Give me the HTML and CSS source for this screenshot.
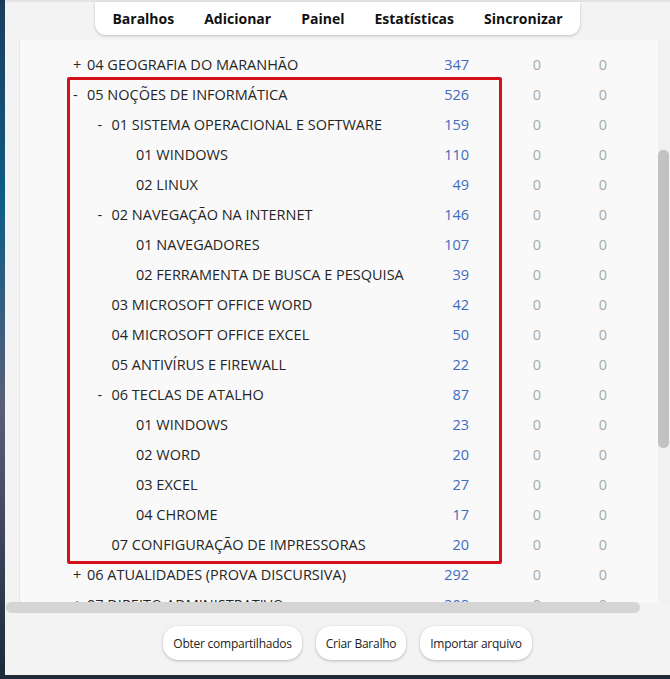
FILE: index.html
```html
<!DOCTYPE html>
<html lang="pt-BR">
<head>
  <meta charset="UTF-8" />
  <meta name="viewport" content="width=device-width, initial-scale=1.0"/>
  <title>Baralhos</title>
  <link rel="stylesheet" href="styles.css">
</head>
<body>

<div class="window">

  <nav class="toolbar">
    <span>Baralhos</span>
    <span>Adicionar</span>
    <span>Painel</span>
    <span>Estatísticas</span>
    <span>Sincronizar</span>
  </nav>

  <div class="browser">
    <div class="deck-panel">
      <div class="deck-list">
        <div class="row"><span class="name"><i>+</i>04 GEOGRAFIA DO MARANHÃO</span><span class="due">347</span><span class="zero">0</span><span class="zero">0</span></div>
        <div class="row"><span class="name"><i>-</i>05 NOÇÕES DE INFORMÁTICA</span><span class="due">526</span><span class="zero">0</span><span class="zero">0</span></div>
        <div class="row"><span class="name lvl-1"><i>-</i>01 SISTEMA OPERACIONAL E SOFTWARE</span><span class="due">159</span><span class="zero">0</span><span class="zero">0</span></div>
        <div class="row"><span class="name lvl-2"><i></i>01 WINDOWS</span><span class="due">110</span><span class="zero">0</span><span class="zero">0</span></div>
        <div class="row"><span class="name lvl-2"><i></i>02 LINUX</span><span class="due">49</span><span class="zero">0</span><span class="zero">0</span></div>
        <div class="row"><span class="name lvl-1"><i>-</i>02 NAVEGAÇÃO NA INTERNET</span><span class="due">146</span><span class="zero">0</span><span class="zero">0</span></div>
        <div class="row"><span class="name lvl-2"><i></i>01 NAVEGADORES</span><span class="due">107</span><span class="zero">0</span><span class="zero">0</span></div>
        <div class="row"><span class="name lvl-2"><i></i>02 FERRAMENTA DE BUSCA E PESQUISA</span><span class="due">39</span><span class="zero">0</span><span class="zero">0</span></div>
        <div class="row"><span class="name lvl-1"><i></i>03 MICROSOFT OFFICE WORD</span><span class="due">42</span><span class="zero">0</span><span class="zero">0</span></div>
        <div class="row"><span class="name lvl-1"><i></i>04 MICROSOFT OFFICE EXCEL</span><span class="due">50</span><span class="zero">0</span><span class="zero">0</span></div>
        <div class="row"><span class="name lvl-1"><i></i>05 ANTIVÍRUS E FIREWALL</span><span class="due">22</span><span class="zero">0</span><span class="zero">0</span></div>
        <div class="row"><span class="name lvl-1"><i>-</i>06 TECLAS DE ATALHO</span><span class="due">87</span><span class="zero">0</span><span class="zero">0</span></div>
        <div class="row"><span class="name lvl-2"><i></i>01 WINDOWS</span><span class="due">23</span><span class="zero">0</span><span class="zero">0</span></div>
        <div class="row"><span class="name lvl-2"><i></i>02 WORD</span><span class="due">20</span><span class="zero">0</span><span class="zero">0</span></div>
        <div class="row"><span class="name lvl-2"><i></i>03 EXCEL</span><span class="due">27</span><span class="zero">0</span><span class="zero">0</span></div>
        <div class="row"><span class="name lvl-2"><i></i>04 CHROME</span><span class="due">17</span><span class="zero">0</span><span class="zero">0</span></div>
        <div class="row"><span class="name lvl-1"><i></i>07 CONFIGURAÇÃO DE IMPRESSORAS</span><span class="due">20</span><span class="zero">0</span><span class="zero">0</span></div>
        <div class="row"><span class="name"><i>+</i>06 ATUALIDADES (PROVA DISCURSIVA)</span><span class="due">292</span><span class="zero">0</span><span class="zero">0</span></div>
        <div class="row"><span class="name"><i>+</i>07 DIREITO ADMINISTRATIVO</span><span class="due">308</span><span class="zero">0</span><span class="zero">0</span></div>

        <!-- highlight around the expanded deck -->
        <div class="highlight"></div>
      </div>
    </div>
    <div class="vscroll"><div class="thumb"></div></div>
  </div>

  <div class="hscroll"></div>

  <div class="actions">
    <button>Obter compartilhados</button>
    <button>Criar Baralho</button>
    <button>Importar arquivo</button>
  </div>

</div>

</body>
</html>
```

FILE: styles.css
```css
body {
  margin: 0;
  height: 679px;
  overflow: hidden;
  background: linear-gradient(180deg, #1b3d5c 0%, #0f5d86 30%, #5a5f78 60%, #1c2a3a 100%);
  font-family: "Open Sans", "Noto Sans", Arial, sans-serif;
  color: #262626;
}

.window {
  margin-left: 5px;
  height: 676px;
  background: #f3f3f3;
  border-top: 2px solid #e4e4e4;
  box-sizing: border-box;
  display: flex;
  flex-direction: column;
  border-bottom: 1px solid #2a2a2a;
}

/* top menu */
.toolbar {
  align-self: center;
  display: flex;
  gap: 30px;
  height: 33px;
  padding: 0 17px;
  margin-left: 0;
  align-items: center;
  background: #fff;
  border-radius: 0 0 11px 11px;
  box-shadow: 0 1px 3px rgba(0, 0, 0, 0.22);
  font-weight: 700;
  font-size: 14px;
  color: #111;
}

.browser {
  display: flex;
  margin-top: 5px;
  height: 562px;
}

.deck-panel {
  flex: 1;
  margin-left: 14px;
  background: #f9f9f9;
  border-left: 1px solid #e6e6e6;
  overflow: hidden;
}

.deck-list {
  position: relative;
  padding: 9px 0 0 53px;
}

.row {
  display: grid;
  grid-template-columns: 346px 50px 72px 66px;
  height: 30px;
  align-items: center;
  font-size: 14.5px;
  white-space: nowrap;
}

.name i {
  display: inline-block;
  width: 14px;
  font-style: normal;
}

.name.lvl-1 { padding-left: 24.5px; }
.name.lvl-2 { padding-left: 49px; }

.due, .zero { text-align: right; }
.due { color: #3f6cc0; }
.zero { color: #a9a9a9; }

.highlight {
  position: absolute;
  left: 47px;
  top: 37px;
  width: 429px;
  height: 481px;
  border: 3px solid #d4111a;
  border-radius: 2px;
}

.vscroll {
  width: 12px;
  background: #f1f1f1;
  padding-top: 110px;
}

.vscroll .thumb {
  width: 11px;
  height: 298px;
  background: #c2c2c2;
  border-radius: 5px;
}

.hscroll {
  height: 11px;
  width: 634px;
  margin-left: 1px;
  background: #d5d5d5;
  border-radius: 6px;
}

.actions {
  display: flex;
  justify-content: center;
  gap: 14px;
  margin-top: 13px;
  padding-left: 20px;
}

.actions button {
  height: 34px;
  padding: 0 10px;
  background: #fff;
  border: none;
  border-radius: 15px;
  box-shadow: 0 1px 3px rgba(0, 0, 0, 0.25);
  font-family: "Open Sans", "Noto Sans", Arial, sans-serif;
  font-size: 12px;
  letter-spacing: -0.25px;
  color: #222;
}
```
